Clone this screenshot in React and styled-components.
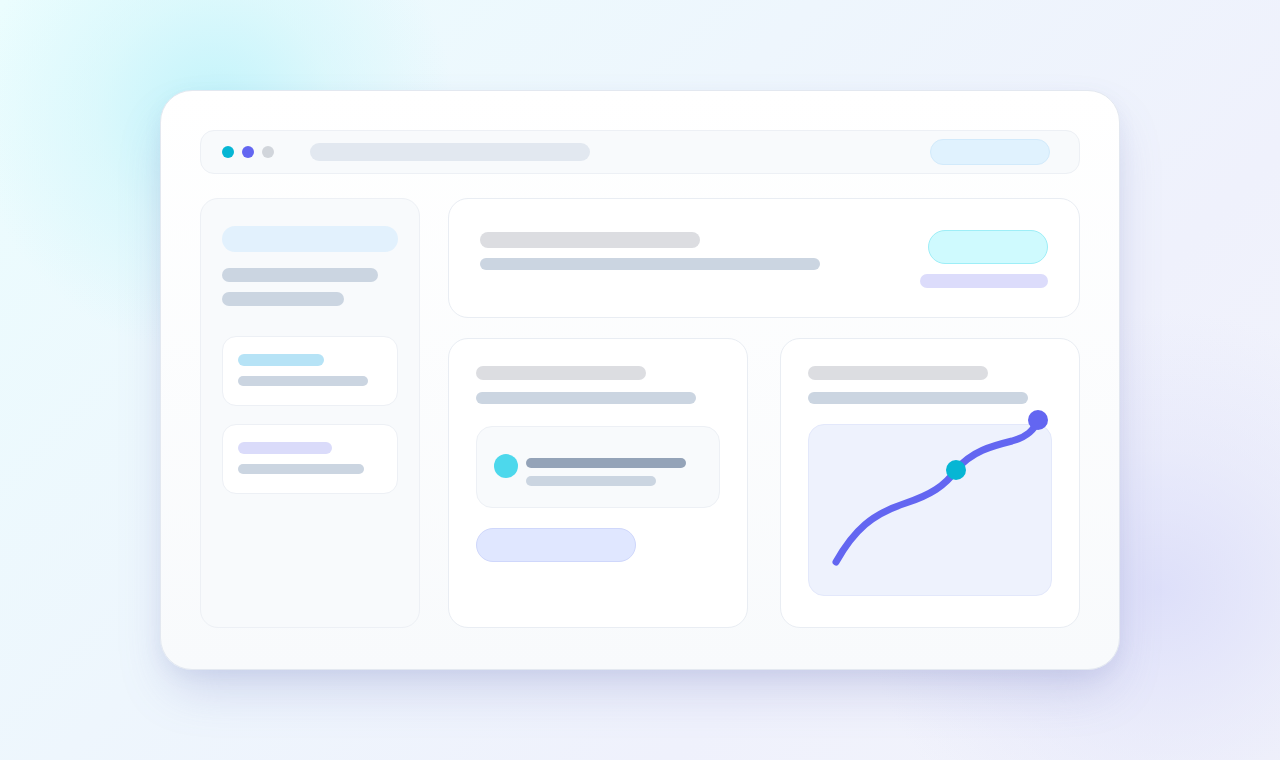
import React from 'react';
import styled, { createGlobalStyle } from 'styled-components';

const GlobalStyle = createGlobalStyle`
  html, body {
    margin: 0;
    padding: 0;
  }
  body {
    font-family: Inter, "Noto Sans", sans-serif;
  }
  * {
    box-sizing: border-box;
  }
`;

const Page = styled.div`
  width: 1280px;
  height: 760px;
  display: flex;
  align-items: center;
  justify-content: center;
  overflow: hidden;
  background:
    radial-gradient(circle at 215px 115px, rgba(186, 242, 250, 0.85) 0, rgba(200, 245, 250, 0.45) 120px, rgba(230, 250, 252, 0) 240px),
    radial-gradient(ellipse 300px 280px at 1160px 590px, rgba(218, 220, 249, 0.85) 0, rgba(224, 226, 250, 0.45) 150px, rgba(238, 240, 252, 0) 300px),
    linear-gradient(135deg, #ebfdfe 0%, #eef6fd 40%, #eff1fc 70%, #f3f4fb 100%);
`;

const Frame = styled.div`
  width: 960px;
  height: 580px;
  padding: 39px;
  border: 1px solid #e3e8f0;
  border-radius: 32px;
  background: linear-gradient(180deg, #ffffff 0%, #f8fafc 100%);
  box-shadow: 0 26px 50px -10px rgba(110, 118, 190, 0.28), 0 6px 18px rgba(120, 130, 180, 0.08);
  display: flex;
  flex-direction: column;
`;

const TopBar = styled.div`
  height: 44px;
  display: flex;
  align-items: center;
  padding: 0 29px 0 21px;
  background: #f8fafc;
  border: 1px solid #edf0f5;
  border-radius: 14px;
`;

const Dots = styled.div`
  display: flex;
  gap: 8px;
`;

const Dot = styled.span`
  width: 12px;
  height: 12px;
  border-radius: 50%;
  background: ${(p) => p.color};
`;

const Bar = styled.div`
  width: ${(p) => p.w}px;
  height: ${(p) => p.h}px;
  border-radius: ${(p) => p.h / 2}px;
  background: ${(p) => p.color || '#cbd5e1'};
  margin-top: ${(p) => p.mt || 0}px;
  flex-shrink: 0;
`;

const UrlBar = styled(Bar)`
  margin-left: 36px;
`;

const Pill = styled.div`
  width: ${(p) => p.w}px;
  height: ${(p) => p.h}px;
  border-radius: ${(p) => p.h / 2}px;
  background: ${(p) => p.bg};
  border: 1px solid ${(p) => p.border};
  margin-top: ${(p) => p.mt || 0}px;
  flex-shrink: 0;
`;

const TopPill = styled(Pill)`
  margin-left: auto;
`;

const Main = styled.div`
  margin-top: 24px;
  height: 430px;
  display: grid;
  grid-template-columns: 220px 1fr;
  gap: 28px;
`;

const Sidebar = styled.div`
  background: #f8fafc;
  border: 1px solid #edf0f5;
  border-radius: 18px;
  padding: 27px 21px;
  display: flex;
  flex-direction: column;
`;

const SideCards = styled.div`
  margin-top: 30px;
  display: flex;
  flex-direction: column;
  gap: 18px;
`;

const SideCard = styled.div`
  height: 70px;
  background: #ffffff;
  border: 1px solid #edf0f5;
  border-radius: 14px;
  padding: 17px 15px;
`;

const Content = styled.div`
  display: flex;
  flex-direction: column;
  gap: 20px;
`;

const Card = styled.div`
  background: #ffffff;
  border: 1px solid #e9edf3;
  border-radius: 20px;
`;

const HeaderCard = styled(Card)`
  height: 120px;
  padding: 31px;
  display: flex;
  justify-content: space-between;
  align-items: flex-start;
`;

const Stack = styled.div`
  display: flex;
  flex-direction: column;
  align-items: ${(p) => p.align || 'flex-start'};
  margin-top: ${(p) => p.mt || 0}px;
`;

const Row = styled.div`
  height: 290px;
  display: grid;
  grid-template-columns: 1fr 1fr;
  gap: 32px;
`;

const PanelCard = styled(Card)`
  padding: 27px;
  display: flex;
  flex-direction: column;
`;

const ItemBox = styled.div`
  margin-top: 22px;
  width: 244px;
  height: 82px;
  background: #f8fafc;
  border: 1px solid #edf0f5;
  border-radius: 16px;
  padding: 27px 17px 0;
  display: flex;
  align-items: flex-start;
  gap: 8px;
`;

const Avatar = styled.span`
  width: 24px;
  height: 24px;
  border-radius: 50%;
  background: #4dd8ec;
  flex-shrink: 0;
`;

const ChartBox = styled.div`
  position: relative;
  margin-top: 20px;
  width: 244px;
  height: 172px;
  background: #eef2fd;
  border: 1px solid #e3e8fb;
  border-radius: 16px;
`;

const ChartSvg = styled.svg`
  position: absolute;
  left: -1px;
  top: -1px;
  overflow: visible;
`;

const Chart = () => (
  <ChartBox>
    <ChartSvg width="244" height="172" viewBox="0 0 244 172">
      <path
        d="M28 138 C 46 106, 64 90, 98 79 C 122 71, 137 62, 148 46 C 164 27, 184 22, 204 17 C 218 13, 226 7, 230 -4"
        fill="none"
        stroke="#6366f1"
        strokeWidth="7"
        strokeLinecap="round"
      />
      <circle cx="148" cy="46" r="10" fill="#06b6d4" />
      <circle cx="230" cy="-4" r="10" fill="#6366f1" />
    </ChartSvg>
  </ChartBox>
);

const App = () => (
  <>
    <GlobalStyle />
    <Page>
      <Frame>
        <TopBar>
          <Dots>
            <Dot color="#06b6d4" />
            <Dot color="#6366f1" />
            <Dot color="#d1d5db" />
          </Dots>
          <UrlBar w={280} h={18} color="#e2e8f0" />
          <TopPill w={120} h={26} bg="#e0f2fe" border="#d2eafb" />
        </TopBar>
        <Main>
          <Sidebar>
            <Bar w={176} h={26} color="#e2f1fd" />
            <Bar w={156} h={14} mt={16} />
            <Bar w={122} h={14} mt={10} />
            <SideCards>
              <SideCard>
                <Bar w={86} h={12} color="#b6e3f6" />
                <Bar w={130} h={10} mt={10} />
              </SideCard>
              <SideCard>
                <Bar w={94} h={12} color="#dadbfa" />
                <Bar w={126} h={10} mt={10} />
              </SideCard>
            </SideCards>
          </Sidebar>
          <Content>
            <HeaderCard>
              <Stack mt={2}>
                <Bar w={220} h={16} color="#dcdde1" />
                <Bar w={340} h={12} mt={10} />
              </Stack>
              <Stack align="flex-end">
                <Pill w={120} h={34} bg="#cffafe" border="#9eeef7" />
                <Bar w={128} h={14} mt={10} color="#dcdcfb" />
              </Stack>
            </HeaderCard>
            <Row>
              <PanelCard>
                <Bar w={170} h={14} color="#dcdde1" />
                <Bar w={220} h={12} mt={12} />
                <ItemBox>
                  <Avatar />
                  <Stack mt={4}>
                    <Bar w={160} h={10} color="#94a3b8" />
                    <Bar w={130} h={10} mt={8} />
                  </Stack>
                </ItemBox>
                <Pill w={160} h={34} mt={20} bg="#e0e7ff" border="#cfd7fb" />
              </PanelCard>
              <PanelCard>
                <Bar w={180} h={14} color="#dcdde1" />
                <Bar w={220} h={12} mt={12} />
                <Chart />
              </PanelCard>
            </Row>
          </Content>
        </Main>
      </Frame>
    </Page>
  </>
);

export default App;
